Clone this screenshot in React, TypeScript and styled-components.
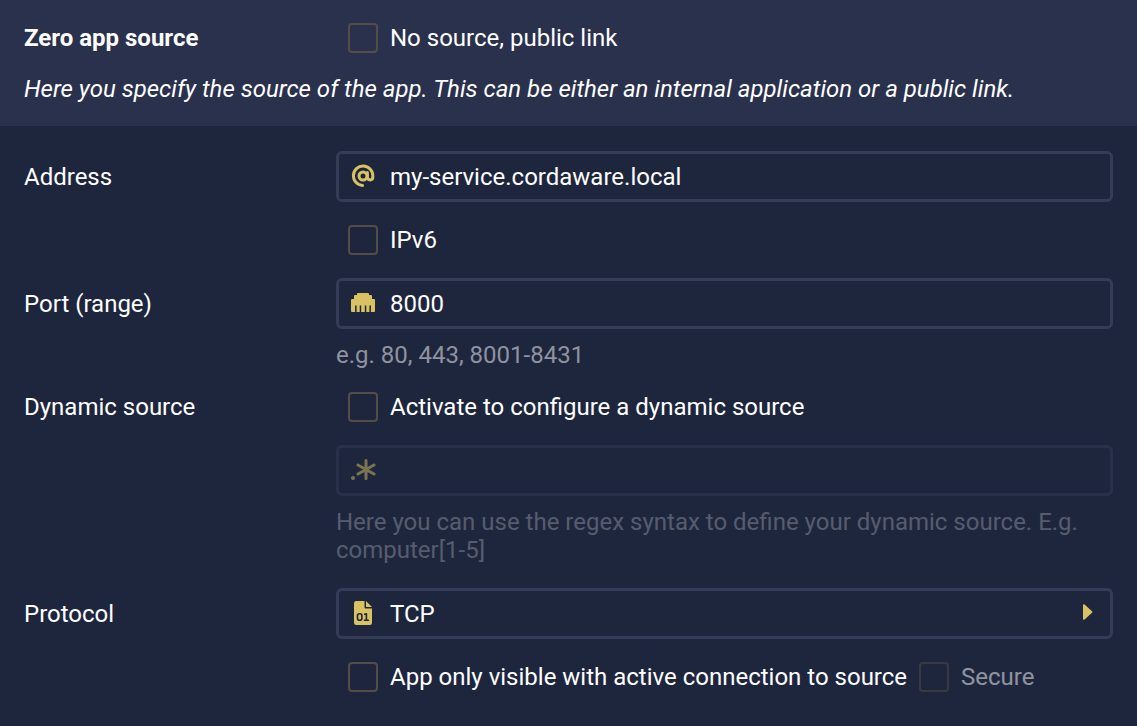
import React from "react";
import styled, { createGlobalStyle } from "styled-components";

const colors = {
  page: "#1e263e",
  header: "#2a314d",
  border: "#353c57",
  accent: "#d8c262",
  tick: "#544d47",
  muted: "#8f939f",
};

const GlobalStyle = createGlobalStyle`
  *, *::before, *::after { box-sizing: border-box; }
  body {
    margin: 0;
    background: ${colors.page};
    color: #fff;
    font: 400 24px/28px Roboto, "Liberation Sans", sans-serif;
  }
`;

const Header = styled.header`
  display: flex;
  flex-direction: column;
  gap: 23px;
  padding: 24px 24px 23px;
  background: ${colors.header};
`;

const Title = styled.h1`
  margin: 0;
  font-size: 24px;
  line-height: 28px;
  font-weight: 700;
`;

const Description = styled.p`
  margin: 0;
  font-style: italic;
`;

const Form = styled.form`
  display: flex;
  flex-direction: column;
  gap: 24px;
  padding: 25px 24px;
`;

const Row = styled.div`
  display: grid;
  grid-template-columns: 312px minmax(0, 1fr);
`;

const Label = styled.label<{ $field?: boolean }>`
  padding-top: ${(p) => (p.$field ? 12 : 0)}px;
`;

const Controls = styled.div`
  display: flex;
  flex-direction: column;
  gap: 24px;
`;

const FieldGroup = styled.div<{ $disabled?: boolean }>`
  display: flex;
  flex-direction: column;
  gap: 12px;
  opacity: ${(p) => (p.$disabled ? 0.5 : 1)};
`;

const Field = styled.div`
  display: flex;
  align-items: center;
  height: 51px;
  padding: 0 12px 0 9px;
  border: 3px solid ${colors.border};
  border-radius: 6px;
  color: ${colors.accent};
`;

const IconSlot = styled.span`
  display: flex;
  flex: none;
  justify-content: center;
  width: 30px;
  margin: 0 12px 2px 0;
`;

const Input = styled.input`
  flex: 1;
  min-width: 0;
  padding: 0;
  border: 0;
  outline: 0;
  background: none;
  color: #fff;
  font: inherit;
`;

const Select = styled.select`
  flex: 1;
  min-width: 0;
  padding: 0;
  border: 0;
  outline: 0;
  appearance: none;
  background: none;
  color: #fff;
  font: inherit;
`;

const Hint = styled.p`
  margin: 0;
  color: ${colors.muted};
`;

const CheckLine = styled.div`
  display: flex;
  flex-wrap: wrap;
  gap: 12px;
  padding-left: 12px;
`;

const CheckLabel = styled.label<{ $disabled?: boolean }>`
  display: flex;
  align-items: center;
  gap: 12px;
  height: 28px;
  opacity: ${(p) => (p.$disabled ? 0.5 : 1)};
`;

const Tick = styled.input.attrs({ type: "checkbox" })`
  flex: none;
  width: 30px;
  height: 30px;
  margin: 0;
  appearance: none;
  border: 2px solid ${colors.tick};
  border-radius: 4px;

  &:checked {
    background: ${colors.accent};
  }
`;

const AtIcon = () => (
  <svg width="24" height="24" viewBox="0 0 24 24" aria-hidden="true">
    <g fill="none" stroke="currentColor" strokeWidth="3" strokeLinecap="round">
      <path d="M11.6 21.4A9.7 9.7 0 1 1 21.8 11.8V13C21.8 14.9 20.8 15.9 19.2 15.9S16.4 14.9 16.4 13V8.4" />
      <circle cx="12" cy="12" r="4" />
    </g>
  </svg>
);

const EthernetIcon = () => (
  <svg width="24" height="20" viewBox="0 0 24 20" aria-hidden="true">
    <path
      d="M7 0H17Q18 0 18 1V2H20Q21 2 21 3V6H23Q24 6 24 7V18Q24 19 23 19H19.9V12.4H18.4V19H15.3V12.4H13.8V19H10.2V12.4H8.7V19H5.6V12.4H4.1V19H1Q0 19 0 18V7Q0 6 1 6H3V3Q3 2 4 2H6V1Q6 0 7 0Z"
      fill="currentColor"
    />
  </svg>
);

const RegexIcon = () => (
  <svg width="26" height="24" viewBox="0 0 26 24" aria-hidden="true">
    <circle cx="3" cy="20" r="2" fill="currentColor" />
    <path
      d="M16 2.5v18M8 7l16 9M24 7l-16 9"
      stroke="currentColor"
      strokeWidth="3"
      strokeLinecap="round"
      fill="none"
    />
  </svg>
);

const BinaryFileIcon = () => (
  <svg width="18" height="24" viewBox="0 0 18 24" aria-hidden="true">
    <path
      d="M2.2 0H10.5V6.2Q10.5 7.5 11.8 7.5H18V21.8Q18 24 15.8 24H2.2Q0 24 0 21.8V2.2Q0 0 2.2 0ZM12 0L18 6H12Z"
      fill="currentColor"
    />
    <g fill="none" stroke={colors.page} strokeWidth="1.6" strokeLinecap="round" strokeLinejoin="round">
      <rect x="3.5" y="12.8" width="4.4" height="6.4" rx="2" />
      <path d="M10.7 13.3L12.4 12.8V19.2M10.5 19.2H14.4" />
    </g>
  </svg>
);

const ArrowIcon = () => (
  <svg width="10" height="16" viewBox="0 0 10 16" aria-hidden="true">
    <path d="M0 1.2Q0 -0.4 1.6 0.6L9 7.2Q9.8 8 9 8.8L1.6 15.4Q0 16.4 0 14.8Z" fill="currentColor" />
  </svg>
);

const ArrowSlot = styled.span`
  display: flex;
  margin: 0 5px 4px 0;
`;

export default function App() {
  return (
    <main>
      <GlobalStyle />
      <Header>
        <Row>
          <Title>Zero app source</Title>
          <CheckLine>
            <CheckLabel>
              <Tick />
              No source, public link
            </CheckLabel>
          </CheckLine>
        </Row>
        <Description>
          Here you specify the source of the app. This can be either an internal application or a public link.
        </Description>
      </Header>
      <Form>
        <Row>
          <Label htmlFor="address" $field>Address</Label>
          <Controls>
            <Field>
              <IconSlot><AtIcon /></IconSlot>
              <Input id="address" defaultValue="my-service.cordaware.local" />
            </Field>
            <CheckLine>
              <CheckLabel>
                <Tick />
                IPv6
              </CheckLabel>
            </CheckLine>
          </Controls>
        </Row>
        <Row>
          <Label htmlFor="port" $field>Port (range)</Label>
          <FieldGroup>
            <Field>
              <IconSlot><EthernetIcon /></IconSlot>
              <Input id="port" defaultValue="8000" />
            </Field>
            <Hint>e.g. 80, 443, 8001-8431</Hint>
          </FieldGroup>
        </Row>
        <Row>
          <Label htmlFor="dynamic">Dynamic source</Label>
          <Controls>
            <CheckLine>
              <CheckLabel>
                <Tick id="dynamic" />
                Activate to configure a dynamic source
              </CheckLabel>
            </CheckLine>
            <FieldGroup $disabled>
              <Field>
                <IconSlot><RegexIcon /></IconSlot>
                <Input aria-label="Dynamic source pattern" disabled />
              </Field>
              <Hint>
                Here you can use the regex syntax to define your dynamic source. E.g. computer[1-5]
              </Hint>
            </FieldGroup>
          </Controls>
        </Row>
        <Row>
          <Label htmlFor="protocol" $field>Protocol</Label>
          <Controls>
            <Field>
              <IconSlot><BinaryFileIcon /></IconSlot>
              <Select id="protocol" defaultValue="TCP">
                <option>TCP</option>
                <option>UDP</option>
              </Select>
              <ArrowSlot><ArrowIcon /></ArrowSlot>
            </Field>
            <CheckLine>
              <CheckLabel>
                <Tick />
                App only visible with active connection to source
              </CheckLabel>
              <CheckLabel $disabled>
                <Tick disabled />
                Secure
              </CheckLabel>
            </CheckLine>
          </Controls>
        </Row>
      </Form>
    </main>
  );
}
